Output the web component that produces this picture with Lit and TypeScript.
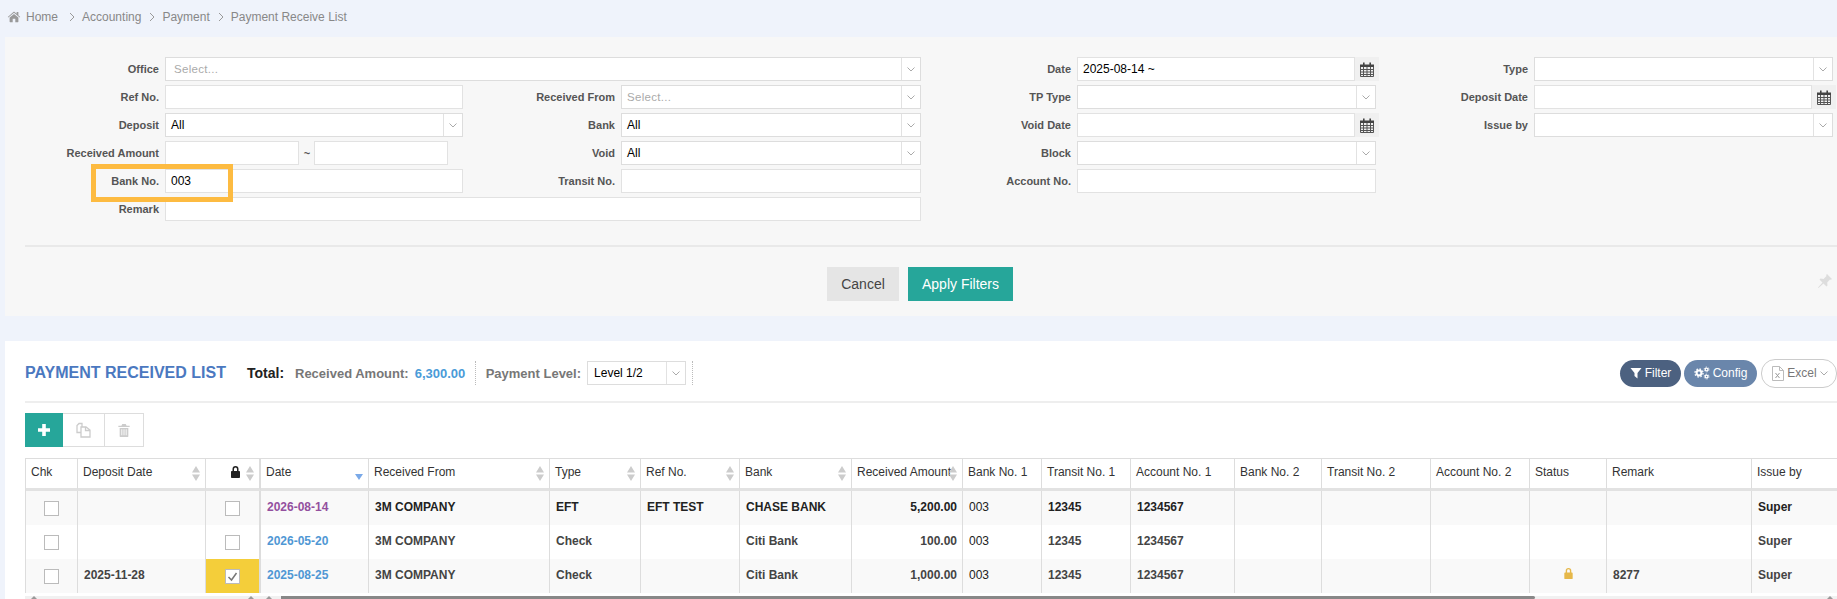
import { LitElement, html, css, svg } from "lit";
import { customElement } from "lit/decorators.js";

const homeIcon = svg`<path d="M13 8.6v4.800c0 .3-.2.5-.5.5H9.500V10h-3v3.900H3.500c-.3 0-.5-.2-.5-.5V8.600L8 4.500zM15.100 7.900l-.6.7L8 3.200 1.500 8.600l-.6-.7 6.400-5.600c.4-.3 1-.3 1.400 0L11 4.200V2.400h2v3.500z"/>`;

const chevron = html`<svg class="crumb-sep" viewBox="0 0 8 10"><path d="M2 1l4 4-4 4" fill="none" stroke="#999" stroke-width="1"/></svg>`;

const calendarIcon = html`<svg class="cal" viewBox="0 0 14 15">
  <path fill="#444" d="M0 2.500h14V5H0zM3 .5h1.600v3H3zM9.400 .5H11v3H9.400z"/>
  <path fill="none" stroke="#555" stroke-width="1" d="M.5 5v9.500h13V5M.5 7.500h13M.5 10h13M.5 12.500h13M3.500 5v9.500M7 5v9.500M10.500 5v9.500"/>
</svg>`;

const arrowDown = html`<svg class="arrow" viewBox="0 0 8 5"><path d="M.5 .5L4 4l3.500-3.500" fill="none" stroke="#aaa" stroke-width="1"/></svg>`;

const lockShape = svg`<path fill-rule="evenodd" d="M3 6V4a3 3 0 0 1 6 0v2h.5c.5 0 1 .4 1 1v5c0 .6-.5 1-1 1h-7c-.5 0-1-.4-1-1V7c0-.6.5-1 1-1zM4.500 6h3V4a1.500 1.500 0 0 0-3 0z"/>`;

// a gear is a thick ring with a dashed ring round it for the teeth
const gear = (x: number, y: number, big: boolean) => svg`
  <circle cx=${x} cy=${y} r=${big ? 2.6 : 1.5} fill="none" stroke="#fff" stroke-width=${big ? 2.2 : 1.4}></circle>
  <circle cx=${x} cy=${y} r=${big ? 4.3 : 2.6} fill="none" stroke="#fff" stroke-width=${big ? 1.4 : 1} stroke-dasharray=${big ? 1.69 : 1.36}></circle>`;

function select(value = "", placeholder = "", wide = false) {
  return html`<div class="input select">
    <span class="value ${placeholder ? "placeholder" : ""} ${wide ? "wide" : ""}">${value || placeholder}</span>
    <span class="caret">${arrowDown}</span>
  </div>`;
}

function text(value = "") {
  return html`<div class="input"><span class="value">${value}</span></div>`;
}

function date(value = "") {
  return html`<div class="date">
    <div class="input"><span class="value">${value}</span></div>
    <span class="addon">${calendarIcon}</span>
  </div>`;
}

type Col = { title: string; w: number; sort?: boolean; cls?: string };

const columns: Col[] = [
  { title: "Chk", w: 52 },
  { title: "Deposit Date", w: 128, sort: true },
  { title: "", w: 55, sort: true, cls: "frozen" },
  { title: "Date", w: 108 },
  { title: "Received From", w: 181, sort: true },
  { title: "Type", w: 91, sort: true },
  { title: "Ref No.", w: 99, sort: true },
  { title: "Bank", w: 112, sort: true },
  { title: "Received Amount", w: 111, sort: true },
  { title: "Bank No. 1", w: 79 },
  { title: "Transit No. 1", w: 89 },
  { title: "Account No. 1", w: 104 },
  { title: "Bank No. 2", w: 87 },
  { title: "Transit No. 2", w: 109 },
  { title: "Account No. 2", w: 99 },
  { title: "Status", w: 77 },
  { title: "Remark", w: 145 },
  { title: "Issue by", w: 110 },
];

const rows = [
  { deposit: "", date: "2026-08-14", dateCls: "purple", type: "EFT", ref: "EFT TEST", bank: "CHASE BANK", amount: "5,200.00", locked: false, remark: "", strong: true },
  { deposit: "", date: "2026-05-20", dateCls: "blue", type: "Check", ref: "", bank: "Citi Bank", amount: "100.00", locked: false, remark: "", strong: false },
  { deposit: "2025-11-28", date: "2025-08-25", dateCls: "blue", type: "Check", ref: "", bank: "Citi Bank", amount: "1,000.00", locked: true, remark: "8277", strong: false },
];

@customElement("app-root")
export class AppRoot extends LitElement {
  static styles = css`
    :host {
      display: block;
      position: relative;
      width: 1837px;
      height: 599px;
      overflow: hidden;
      background: #eff3fb;
      font-family: "Liberation Sans", Arial, sans-serif;
      font-size: 12px;
      color: #333;
    }
    .crumbs {
      display: flex;
      align-items: center;
      height: 37px;
      padding: 0 0 3px 7px;
      box-sizing: border-box;
      color: #888;
      font-size: 12px;
    }
    .crumbs .home {
      width: 14px;
      height: 14px;
      fill: #999;
      margin-right: 5px;
    }
    .crumbs .first {
      margin-right: 3px;
    }
    .crumb-sep {
      width: 8px;
      height: 10px;
      margin: 0 6px 0 7px;
    }
    .filters {
      margin-left: 5px;
      height: 279px;
      box-sizing: border-box;
      background: #f7f7f7;
      padding-top: 20px;
    }
    .form {
      display: grid;
      grid-template-columns: 160px 298px 158px 300px 156px 299px 158px 299px;
      grid-auto-rows: 24px;
      row-gap: 4px;
      height: 188px;
    }
    .label {
      display: flex;
      align-items: center;
      justify-content: flex-end;
      padding-right: 6px;
      font-weight: bold;
      font-size: 11px;
      color: #555;
      white-space: nowrap;
    }
    .span3 {
      grid-column: span 3;
    }
    .input {
      display: flex;
      align-items: center;
      box-sizing: border-box;
      height: 24px;
      min-width: 0;
      background: #fff;
      border: 1px solid #e2e2e2;
    }
    .select {
      border-color: #ddd;
    }
    .value {
      flex: 1;
      padding-left: 5px;
      color: #000;
      font-size: 12px;
    }
    .value.placeholder {
      color: #aaa;
      font-size: 11.5px;
      letter-spacing: 0.3px;
    }
    .placeholder.wide {
      padding-left: 8px;
    }
    .caret {
      display: flex;
      align-items: center;
      justify-content: center;
      width: 18px;
      height: 100%;
      border-left: 1px solid #e2e2e2;
    }
    .arrow {
      width: 8px;
      height: 5px;
    }
    .date {
      display: flex;
      margin-right: -3px;
      height: 24px;
    }
    .date .input {
      flex: 1;
    }
    .addon {
      display: flex;
      align-items: center;
      justify-content: center;
      width: 24px;
      background: #f0f0f0;
    }
    .cal {
      width: 14px;
      height: 15px;
    }
    .range {
      display: flex;
      align-items: center;
    }
    .range .input {
      width: 134px;
    }
    .tilde {
      width: 15px;
      padding-left: 1px;
      box-sizing: border-box;
      text-align: center;
      font-weight: bold;
      font-size: 11px;
      color: #555;
    }
    .rule {
      height: 2px;
      background: #e9e9e9;
      margin: 0 0 0 20px;
    }
    .actions {
      display: flex;
      justify-content: center;
      gap: 9px;
      position: relative;
      padding: 20px 2px 0 0;
    }
    .btn {
      height: 34px;
      padding: 0;
      border: 0;
      font-family: inherit;
      font-size: 14px;
    }
    .btn.cancel {
      width: 72px;
      background: #e5e5e5;
      color: #444;
    }
    .btn.apply {
      width: 105px;
      background: #26a69a;
      color: #fff;
    }
    .pin {
      position: absolute;
      right: 4px;
      top: 26px;
      width: 16px;
      height: 16px;
      fill: #ddd;
    }
    .list {
      margin: 25px 0 0 5px;
      height: 258px;
      background: #fff;
      padding-left: 20px;
      overflow: hidden;
    }
    .head {
      display: flex;
      align-items: center;
      height: 62px;
      padding-top: 4px;
      box-sizing: border-box;
      border-bottom: 2px solid #eee;
    }
    .title {
      width: 222px;
      font-size: 16px;
      font-weight: bold;
      color: #4b78c0;
      white-space: nowrap;
    }
    .total {
      width: 48px;
      font-size: 14px;
      font-weight: bold;
      color: #222;
    }
    .muted {
      font-size: 13px;
      font-weight: bold;
      color: #777;
      white-space: nowrap;
    }
    .amount {
      margin-left: 6px;
      width: 60px;
      font-size: 13px;
      font-weight: bold;
      color: #4a9bd8;
    }
    .dotted {
      width: 0;
      height: 24px;
      border-left: 1px dotted #bbb;
    }
    .level {
      display: flex;
      align-items: center;
      margin-left: 10px;
      gap: 6px;
    }
    .level .input {
      width: 99px;
    }
    .level .value {
      padding-left: 6px;
    }
    .tools {
      display: flex;
      align-items: center;
      gap: 3px;
      margin-left: auto;
    }
    .pill {
      display: flex;
      align-items: center;
      justify-content: center;
      gap: 3px;
      box-sizing: border-box;
      height: 27px;
      border-radius: 14px;
      color: #fff;
      font-size: 12px;
    }
    .pill.filter {
      width: 61px;
      background: #4c6180;
    }
    .pill.filter svg {
      fill: #fff;
    }
    .pill.config {
      width: 73px;
      background: #6a86ab;
    }
    .pill.excel {
      width: 76px;
      height: 29px;
      margin-left: 1px;
      padding-left: 2px;
      background: #fff;
      border: 1px solid #ccc;
      color: #777;
    }
    .row-tools {
      display: flex;
      margin-top: 10px;
      height: 34px;
    }
    .tool {
      display: flex;
      align-items: center;
      justify-content: center;
      box-sizing: border-box;
      width: 39px;
      height: 34px;
      border: 1px solid #ddd;
      border-left: 0;
    }
    .tool svg {
      fill: #ccc;
    }
    .tool.add {
      width: 38px;
      border: 0;
      background: #26a69a;
    }
    .tool.add svg {
      fill: #fff;
    }
    .tool.copy {
      width: 42px;
    }
    .table-wrap {
      margin-top: 11px;
      width: 1812px;
      overflow: hidden;
    }
    table {
      border-collapse: separate;
      border-spacing: 0;
      table-layout: fixed;
      border-left: 1px solid #ddd;
    }
    th {
      position: relative;
      height: 33px;
      box-sizing: border-box;
      padding: 0 5px 4px;
      border-top: 1px solid #ddd;
      border-right: 1px solid #ddd;
      border-bottom: 3px solid #e2e2e2;
      text-align: left;
      vertical-align: middle;
      font-size: 12px;
      font-weight: normal;
      color: #333;
      white-space: nowrap;
      overflow: hidden;
    }
    td {
      height: 34px;
      box-sizing: border-box;
      padding: 0 6px 2px;
      border-right: 1px solid #ddd;
      font-size: 12px;
      font-weight: bold;
      color: #444;
      white-space: nowrap;
      overflow: hidden;
    }
    tr.odd td {
      background: #f9f9f9;
    }
    tr.strong td {
      color: #222;
    }
    td.frozen,
    th.frozen {
      border-right: 2px solid #ddd;
    }
    td.center {
      padding: 0;
      text-align: center;
    }
    td.num {
      padding: 0 5px 2px;
      text-align: right;
    }
    td.thin {
      font-weight: normal;
      color: #222;
    }
    tr td.picked {
      background: #f4ce3a;
    }
    tr td.purple {
      color: #93509f;
    }
    tr td.blue {
      color: #4f97d4;
    }
    .box {
      display: inline-flex;
      align-items: center;
      justify-content: center;
      box-sizing: border-box;
      width: 15px;
      height: 15px;
      vertical-align: middle;
      background: #fff;
      border: 1px solid #bbb;
    }
    .box svg {
      width: 11px;
      height: 11px;
    }
    .sort {
      position: absolute;
      top: 7px;
      right: 5px;
      width: 8px;
      height: 15px;
      fill: #ccc;
    }
    .sorted {
      position: absolute;
      top: 15px;
      right: 5px;
      width: 8px;
      height: 6px;
      fill: #7aa9e8;
    }
    .head-lock {
      position: absolute;
      top: 6px;
      left: 23px;
      width: 13px;
      height: 14px;
      fill: #222;
    }
    .status-lock {
      width: 13px;
      height: 13px;
      margin-bottom: 5px;
      fill: #e6b84a;
      vertical-align: middle;
    }
    .scroll {
      display: flex;
      align-items: flex-start;
      height: 6px;
      margin-top: 3px;
      background: #f1f1f1;
    }
    .tip {
      flex: none;
      width: 6px;
      height: 3px;
      fill: #999;
    }
    .tip.a {
      margin-left: 6px;
    }
    .tip.b {
      margin-left: 211px;
    }
    .tip.c {
      margin-left: 12px;
    }
    .tip.d {
      margin-left: 292px;
    }
    .thumb {
      flex: none;
      width: 1254px;
      height: 3px;
      margin-left: 9px;
      background: #888;
      border-radius: 0 2px 2px 0;
    }
    .marker {
      position: absolute;
      left: 91px;
      top: 164px;
      width: 142px;
      height: 38px;
      box-sizing: border-box;
      border: 5px solid #fdbb41;
    }
  `;

  renderHeader(c: Col) {
    return html`<th class=${c.cls ?? ""}>
      ${c.title}
      ${c.cls === "frozen" ? html`<svg class="head-lock" viewBox="0 0 12 14">${lockShape}</svg>` : ""}
      ${c.sort ? html`<svg class="sort" viewBox="0 0 8 15"><path d="M4 0l4 6.500H0zM4 15L0 8.500h8z"/></svg>` : ""}
      ${c.title === "Date" ? html`<svg class="sorted" viewBox="0 0 8 6"><path d="M0 0h8L4 6z"/></svg>` : ""}
    </th>`;
  }

  render() {
    const tip = (cls: string) => html`<svg class="tip ${cls}" viewBox="0 0 6 3"><path d="M3 0l3 3H0z"/></svg>`;
    return html`
      <div class="crumbs">
        <svg class="home" viewBox="0 0 16 16">${homeIcon}</svg>
        <span class="first">Home</span>${chevron}<span>Accounting</span>${chevron}<span>Payment</span>${chevron}<span>Payment Receive List</span>
      </div>

      <section class="filters">
        <div class="form">
          <div class="label">Office</div>
          <div class="span3">${select("", "Select...", true)}</div>
          <div class="label">Date</div>
          ${date("2025-08-14 ~")}
          <div class="label">Type</div>
          ${select()}

          <div class="label">Ref No.</div>
          ${text()}
          <div class="label">Received From</div>
          ${select("", "Select...")}
          <div class="label">TP Type</div>
          ${select()}
          <div class="label">Deposit Date</div>
          ${date()}

          <div class="label">Deposit</div>
          ${select("All")}
          <div class="label">Bank</div>
          ${select("All")}
          <div class="label">Void Date</div>
          ${date()}
          <div class="label">Issue by</div>
          ${select()}

          <div class="label">Received Amount</div>
          <div class="range">
            ${text()}
            <span class="tilde">~</span>
            ${text()}
          </div>
          <div class="label">Void</div>
          ${select("All")}
          <div class="label">Block</div>
          ${select()}
          <div></div>
          <div></div>

          <div class="label">Bank No.</div>
          ${text("003")}
          <div class="label">Transit No.</div>
          ${text()}
          <div class="label">Account No.</div>
          ${text()}
          <div></div>
          <div></div>

          <div class="label">Remark</div>
          <div class="span3">${text()}</div>
        </div>
        <div class="rule"></div>
        <div class="actions">
          <button class="btn cancel">Cancel</button>
          <button class="btn apply">Apply Filters</button>
          <svg class="pin" viewBox="0 0 16 16"><path d="M10 1l5 5-1 .8-1-.4-2.800 3 .3 3-1 1-3-3L1.500 15 1 14.500l4.500-5-3-3 1-1 3 .4 3-2.900-.4-1z"/></svg>
        </div>
      </section>

      <section class="list">
        <div class="head">
          <div class="title">PAYMENT RECEIVED LIST</div>
          <div class="total">Total:</div>
          <span class="muted">Received Amount:</span>
          <span class="amount">6,300.00</span>
          <span class="dotted"></span>
          <div class="level">
            <span class="muted">Payment Level:</span>
            ${select("Level 1/2")}
            <span class="dotted"></span>
          </div>
          <div class="tools">
            <div class="pill filter">
              <svg width="12" height="12" viewBox="0 0 12 12"><path d="M.5 1h11L7.500 6v5.500L4.500 9V6z"/></svg>Filter
            </div>
            <div class="pill config">
              <svg width="16" height="14" viewBox="0 -0.5 16 15">${gear(4.8, 7, true)}${gear(12.9, 3.2, false)}${gear(12.9, 10.8, false)}</svg>Config
            </div>
            <div class="pill excel">
              <svg width="12" height="15" viewBox="0 0 12 15">
                <path fill="none" stroke="#bbb" d="M.5.5h7l4 4v10H.5zM7.500.5v4h4"/>
                <path fill="none" stroke="#999" d="M3.500 7l4 5M7.500 7l-4 5"/>
              </svg>Excel
              ${arrowDown}
            </div>
          </div>
        </div>

        <div class="row-tools">
          <div class="tool add">
            <svg width="12" height="12" viewBox="1 1 10 10"><path d="M4.500 1h3v3.500H11v3H7.500V11h-3V7.500H1v-3h3.500z"/></svg>
          </div>
          <div class="tool copy">
            <svg width="15" height="16" viewBox="0 0 15 16"><path fill="none" stroke="#ccc" stroke-width="1.300" d="M6 4.500V1.500H3L1 3.500v7h3.500M5 5h5l4 3v7H5zM9.500 5v3.500H14"/></svg>
          </div>
          <div class="tool">
            <svg width="12" height="13" viewBox="0 0 13 15"><path d="M4.500 0h4l1 2H13v1.500H0V2h3.500zM1.500 4.500h10V14c0 .6-.4 1-1 1h-8c-.6 0-1-.4-1-1zM3.500 6v7h1V6zM6 6v7h1V6zM8.500 6v7h1V6z" fill-rule="evenodd"/></svg>
          </div>
        </div>

        <div class="table-wrap">
          <table style="width:${columns.reduce((s, c) => s + c.w, 0)}px">
            <colgroup>${columns.map((c) => html`<col style="width:${c.w}px" />`)}</colgroup>
            <thead><tr>${columns.map((c) => this.renderHeader(c))}</tr></thead>
            <tbody>
              ${rows.map(
                (r, i) => html`<tr class="${i % 2 === 0 ? "odd" : ""} ${r.strong ? "strong" : ""}">
                  <td class="center"><span class="box"></span></td>
                  <td>${r.deposit}</td>
                  <td class="center frozen ${r.locked ? "picked" : ""}">
                    <span class="box">
                      ${r.locked
                        ? html`<svg viewBox="0 0 11 11"><path d="M1.500 6l3 3 5-7" fill="none" stroke="#777" stroke-width="1.500"/></svg>`
                        : ""}
                    </span>
                  </td>
                  <td class=${r.dateCls}>${r.date}</td>
                  <td>3M COMPANY</td>
                  <td>${r.type}</td>
                  <td>${r.ref}</td>
                  <td>${r.bank}</td>
                  <td class="num">${r.amount}</td>
                  <td class="thin">003</td>
                  <td>12345</td>
                  <td>1234567</td>
                  <td></td>
                  <td></td>
                  <td></td>
                  <td class="center">
                    ${r.locked ? html`<svg class="status-lock" viewBox="0 0 12 14">${lockShape}</svg>` : ""}
                  </td>
                  <td>${r.remark}</td>
                  <td>Super</td>
                </tr>`
              )}
            </tbody>
          </table>
        </div>
        <div class="scroll">${tip("a")}${tip("b")}${tip("c")}<div class="thumb"></div>${tip("d")}</div>
      </section>

      <div class="marker"></div>
    `;
  }
}
